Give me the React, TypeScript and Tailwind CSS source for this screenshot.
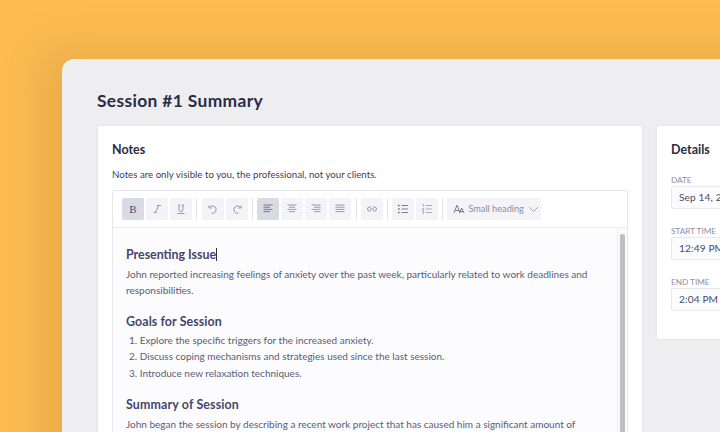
import type { ReactNode } from 'react'

function ToolButton({ active, children }: { active?: boolean; children: ReactNode }) {
  return (
    <div
      className={`flex h-[22px] w-[22px] shrink-0 items-center justify-center rounded-[2px] ${
        active ? 'bg-[#d9dae2]' : 'bg-[#f3f3f8]'
      }`}
    >
      {children}
    </div>
  )
}

function Separator() {
  return <div className="mx-[2px] h-[22px] w-px shrink-0 bg-[#e6e6ea]" />
}

function Icon({ children, color = '#8e8fa3' }: { children: ReactNode; color?: string }) {
  return (
    <svg width="12" height="12" viewBox="0 0 12 12" fill="none" stroke={color} strokeWidth="0.9">
      {children}
    </svg>
  )
}

function AlignIcon({ rows, color }: { rows: [number, number][]; color?: string }) {
  return (
    <Icon color={color}>
      {rows.map(([a, b], i) => (
        <line key={i} x1={a} x2={b} y1={2 + i * 2.2} y2={2 + i * 2.2} />
      ))}
    </Icon>
  )
}

function Field({ label, value }: { label: string; value: string }) {
  return (
    <div>
      <div className="text-[8.2px] leading-[12px] text-[#8d8e9e]">{label}</div>
      <div className="flex h-[23px] w-[100px] items-center rounded-[2px] border border-[#e8e8ec] bg-[#fcfcff] pl-[7px] text-[10.2px] tracking-[0.1px] text-[#4a4b68]">
        {value}
      </div>
    </div>
  )
}

export default function App() {
  return (
    <div className="h-[432px] w-[720px] overflow-hidden bg-[#fdbb52] pl-[62px] pt-[59px] [font-family:Lato,sans-serif]">
      <div className="h-[500px] w-[800px] rounded-tl-[12px] bg-[#eeeef0] pl-[36px] pt-[31px] shadow-[-20px_-10px_40px_rgba(190,140,50,0.3)]">
        <h1 className="-ml-px text-[17.4px] font-bold leading-[22px] tracking-[0.35px] text-[#2b2c45]">Session #1 Summary</h1>

        <div className="mt-[14px] flex items-start gap-[15px]">
          <div className="h-[400px] w-[544px] shrink-0 rounded-[2px] bg-white pl-[14px] pr-[14px] pt-[15px] shadow-[0_0_4px_rgba(40,40,70,0.06)]">
            <h2 className="text-[12.5px] font-bold leading-[17px] text-[#2b2c45]">Notes</h2>
            <p className="mt-[9px] text-[9.7px] leading-[15px] text-[#3f4058]">
              Notes are only visible to you, the professional, not your clients.
            </p>

            <div className="mt-[8px] rounded-[2px] border border-[#e8e8ec]">
              <div className="flex h-[37px] items-center gap-[2.15px] border-b border-[#eeeef1] pl-[9px]">
                <ToolButton active>
                  <span className="text-[11px] leading-none text-[#4a4b78] [font-family:'Liberation_Serif',serif]">B</span>
                </ToolButton>
                <ToolButton>
                  <Icon>
                    <path d="M7.5 2.5 4.5 9.5M6 2.5h4M2.5 9.5h3" />
                  </Icon>
                </ToolButton>
                <ToolButton>
                  <Icon>
                    <path d="M3.5 2h2M7 2h2M4 2v4.5a2 2 0 0 0 4 0V2M2.5 10.5h7" />
                  </Icon>
                </ToolButton>
                <Separator />
                <ToolButton>
                  <Icon>
                    <path d="M2 2.5v2.5h2.5M2.3 5a3.6 3.6 0 1 1 2.2 5" />
                  </Icon>
                </ToolButton>
                <ToolButton>
                  <Icon>
                    <path d="M10 2.5v2.5H7.5M9.7 5a3.6 3.6 0 1 0-2.2 5" />
                  </Icon>
                </ToolButton>
                <Separator />
                <ToolButton active>
                  <AlignIcon color="#6f7088" rows={[[1.5, 10.5], [1.5, 8], [1.5, 10.5], [1.5, 8]]} />
                </ToolButton>
                <ToolButton>
                  <AlignIcon rows={[[1.5, 10.5], [3, 9], [1.5, 10.5], [3, 9]]} />
                </ToolButton>
                <ToolButton>
                  <AlignIcon rows={[[1.5, 10.5], [4, 10.5], [1.5, 10.5], [4, 10.5]]} />
                </ToolButton>
                <ToolButton>
                  <AlignIcon rows={[[1.5, 10.5], [1.5, 10.5], [1.5, 10.5], [1.5, 10.5]]} />
                </ToolButton>
                <Separator />
                <ToolButton>
                  <Icon>
                    <path d="M5 4H3.5a2 2 0 0 0 0 4H5M7 4h1.5a2 2 0 0 1 0 4H7M4 6h4" />
                  </Icon>
                </ToolButton>
                <Separator />
                <ToolButton>
                  <Icon color="#6f7088">
                    <path d="M4.5 2.5H11M4.5 6H11M4.5 9.5H11" />
                    <path d="M1 2.5h1.6M1 6h1.6M1 9.5h1.6" strokeWidth="1.6" />
                  </Icon>
                </ToolButton>
                <ToolButton>
                  <Icon>
                    <path d="M4.5 2.5H11M4.5 6H11M4.5 9.5H11M1.5 1.5h1v2M1.5 5.5h1v1h-1v1h1M1.5 8.5h1v2h-1" strokeWidth="0.7" />
                  </Icon>
                </ToolButton>
                <Separator />
                <div className="flex h-[22px] w-[94px] shrink-0 items-center gap-[3px] rounded-[2px] bg-[#f3f3f8] pl-[6px]">
                  <Icon color="#6f7088">
                    <path d="M.8 10 4 2.2 7.2 10M2 7.5h4M6.5 10l2.2-5 2.3 5M7.3 8.5h2.8" />
                  </Icon>
                  <span className="whitespace-nowrap text-[9.2px] text-[#8e8fa3]">Small heading</span>
                  <svg width="11" height="7" viewBox="0 0 11 7" fill="none" stroke="#8e8fa3" strokeWidth="0.8" className="ml-[1px]">
                    <path d="M1 1l4.5 4.5L10 1" />
                  </svg>
                </div>
              </div>

              <div className="relative h-[300px] bg-[#fcfcff] pl-[13px] pt-[18px] text-[10px] leading-[16.33px] text-[#5a5b75]">
                <h3 className="flex h-[17px] items-center text-[12.4px] font-bold leading-[17px] text-[#45466a]">
                  Presenting Issue
                  <span className="h-[13px] w-px bg-[#2b2c45]" />
                </h3>
                <p className="mt-[3px] w-[470px]">
                  John reported increasing feelings of anxiety over the past week, particularly related to work deadlines and responsibilities.
                </p>
                <h3 className="mt-[14px] h-[17px] text-[12.4px] font-bold leading-[17px] tracking-[0.1px] text-[#45466a]">Goals for Session</h3>
                <ol className="mt-[2.5px] pl-[3px]">
                  <li>1. Explore the specific triggers for the increased anxiety.</li>
                  <li>2. Discuss coping mechanisms and strategies used since the last session.</li>
                  <li>3. Introduce new relaxation techniques.</li>
                </ol>
                <h3 className="mt-[14.5px] h-[17px] text-[12.4px] font-bold leading-[17px] tracking-[0.15px] text-[#45466a]">Summary of Session</h3>
                <p className="mt-[3px] w-[470px]">
                  John began the session by describing a recent work project that has caused him a significant amount of stress.
                </p>
                <div className="absolute bottom-0 right-0 top-0 w-[10px] border-l border-[#f0f0f3] bg-[#fafafc]">
                  <div className="absolute bottom-0 left-[2px] top-[6px] w-[5px] rounded-t-[2px] bg-[#bfbfc2]" />
                </div>
              </div>
            </div>
          </div>

          <div className="h-[213px] w-[180px] shrink-0 rounded-[2px] bg-white pl-[14px] pt-[15px] shadow-[0_0_4px_rgba(40,40,70,0.06)]">
            <h2 className="mb-[16px] text-[12.5px] font-bold leading-[17px] text-[#2b2c45]">Details</h2>
            <div className="flex flex-col gap-[16px]">
              <Field label="DATE" value="Sep 14, 2023" />
              <Field label="START TIME" value="12:49 PM" />
              <Field label="END TIME" value="2:04 PM" />
            </div>
          </div>
        </div>
      </div>
    </div>
  )
}
